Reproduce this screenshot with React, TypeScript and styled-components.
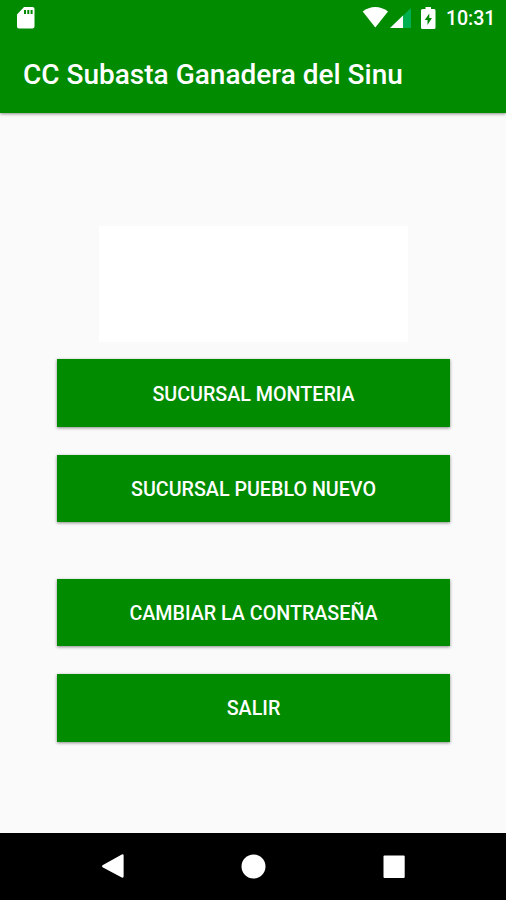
import React from "react";
import styled, { createGlobalStyle } from "styled-components";

const GlobalStyle = createGlobalStyle`
  body {
    margin: 0;
    background: #fafafa;
    font-family: Roboto, "Liberation Sans", sans-serif;
  }
`;

const Screen = styled.div`
  display: flex;
  flex-direction: column;
  width: 100%;
  height: 900px;
  overflow: hidden;
  background: #fafafa;
`;

const Header = styled.header`
  flex: none;
  height: 112.5px;
  background: #008b00;
  color: #fff;
  box-shadow: 0 1px 3px rgba(0, 0, 0, 0.45);
`;

const StatusBar = styled.div`
  display: flex;
  align-items: center;
  height: 35px;
  padding: 0 12px 0 17px;
`;

const StatusIcons = styled.div`
  display: flex;
  align-items: center;
  margin-left: auto;
`;

const Clock = styled.time`
  width: 48px;
  margin-left: 10px;
  padding-top: 2px;
  font-size: 19.6px;
  font-weight: 500;
  line-height: 24px;
  letter-spacing: -0.1px;
  white-space: nowrap;
`;

const Title = styled.h1`
  margin: 0;
  padding: 22px 23px 0;
  font-size: 28px;
  font-weight: 500;
  line-height: 36px;
  white-space: nowrap;
`;

const Content = styled.main`
  flex: 1;
  display: flex;
  flex-direction: column;
  align-items: center;
  padding-top: 113px;
`;

const LogoPanel = styled.div`
  flex: none;
  width: 309px;
  height: 116px;
  background: #fff;
`;

const Actions = styled.div<{ $top: number }>`
  display: flex;
  flex-direction: column;
  gap: 28px;
  width: 393px;
  margin-top: ${({ $top }) => $top}px;
`;

const ActionButton = styled.button`
  height: 67.5px;
  padding: 3px 0 0 1px;
  border: 0;
  background: #008b00;
  box-shadow: 0 1px 3px rgba(0, 0, 0, 0.45);
  color: #fff;
  font-family: inherit;
  font-size: 19.7px;
  font-weight: 500;
  line-height: 24px;
`;

const NavBar = styled.nav`
  flex: none;
  display: flex;
  justify-content: space-between;
  height: 67px;
  box-sizing: border-box;
  padding: 20px 100px 0;
  background: #000;
`;

const Glyph = styled.svg<{ $gap?: number }>`
  display: block;
  flex: none;
  margin-left: ${({ $gap = 0 }) => $gap}px;
  fill: #fff;
`;

export default function App() {
  return (
    <>
      <GlobalStyle />
      <Screen>
        <Header>
          <StatusBar>
            <Glyph width="18" height="22" viewBox="0 0 18 22">
              <path
                fillRule="evenodd"
                d="M7 0h8.500a2 2 0 0 1 2 2v17.500a2 2 0 0 1-2 2H2a2 2 0 0 1-2-2V7.500zM7 3v4h2V3zm3.300 0v4h2V3zm3.300 0v4h2V3z"
              />
            </Glyph>
            <StatusIcons>
              <Glyph width="26" height="21" viewBox="0 0 26 21">
                <path d="M.7 4.500C8-1.500 18.500-1.500 26 4.500L13.300 20.500z" />
              </Glyph>
              <Glyph $gap={2} width="21" height="20" viewBox="0 0 21 20">
                <path fill="#00b050" d="M0 20L21 0v20z" />
                <path d="M0 20L13 7.600V20z" />
              </Glyph>
              <Glyph $gap={10} width="15" height="22" viewBox="0 0 15 22">
                <path
                  fillRule="evenodd"
                  d="M4.500 0h5.500v2h3a1.500 1.500 0 0 1 1.500 1.500v17a1.500 1.500 0 0 1-1.500 1.500H1.500A1.500 1.500 0 0 1 0 20.500v-17A1.500 1.500 0 0 1 1.500 2h3zM8.300 6.500L3.700 13h2.800v5l4.500-7H8.300z"
                />
              </Glyph>
              <Clock>10:31</Clock>
            </StatusIcons>
          </StatusBar>
          <Title>CC Subasta Ganadera del Sinu</Title>
        </Header>
        <Content>
          <LogoPanel />
          <Actions $top={17.8}>
            <ActionButton>SUCURSAL MONTERIA</ActionButton>
            <ActionButton>SUCURSAL PUEBLO NUEVO</ActionButton>
          </Actions>
          <Actions $top={56.4}>
            <ActionButton>CAMBIAR LA CONTRASEÑA</ActionButton>
            <ActionButton>SALIR</ActionButton>
          </Actions>
        </Content>
        <NavBar>
          <Glyph width="26" height="26" viewBox="0 0 26 26">
            <path d="M2.500 12.200L21.800 1.500q1.800-.6 1.800 1v21q0 1.600-1.800 1L2.500 14.200q-1-1 0-2z" />
          </Glyph>
          <Glyph width="26" height="26" viewBox="0 0 26 26">
            <circle cx="13.500" cy="13.500" r="12" />
          </Glyph>
          <Glyph width="26" height="26" viewBox="0 0 26 26">
            <rect x="3.500" y="2.500" width="21.200" height="22.500" rx="1" />
          </Glyph>
        </NavBar>
      </Screen>
    </>
  );
}
